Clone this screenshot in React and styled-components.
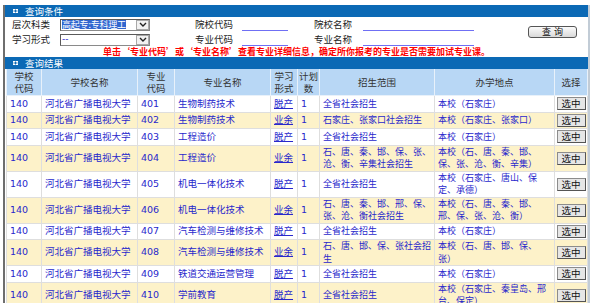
import React from 'react'
import styled, { createGlobalStyle } from 'styled-components'

const GlobalStyle = createGlobalStyle`
  html, body {
    margin: 0;
    padding: 0;
    background: #fff;
  }
  body {
    font-family: "DejaVu Sans", "Noto Sans CJK SC", sans-serif;
    font-size: 9.5px;
    color: #222;
  }
`

const rows = [
  { code: '401', major: '生物制药技术', mode: '脱产', area: '全省社会招生', place: '本校（石家庄）' },
  { code: '402', major: '生物制药技术', mode: '业余', area: '石家庄、张家口社会招生', place: '本校（石家庄、张家口）' },
  { code: '403', major: '工程造价', mode: '脱产', area: '全省社会招生', place: '本校（石家庄）' },
  { code: '404', major: '工程造价', mode: '业余', area: '石、唐、秦、邯、保、张、\n沧、衡、辛集社会招生', place: '本校（石、唐、秦、邯、\n保、张、沧、衡、辛集）' },
  { code: '405', major: '机电一体化技术', mode: '脱产', area: '全省社会招生', place: '本校（石家庄、唐山、保\n定、承德）' },
  { code: '406', major: '机电一体化技术', mode: '业余', area: '石、唐、秦、邯、邢、保、\n张、沧、衡社会招生', place: '本校（石、唐、秦、邯、\n邢、保、张、沧、衡）' },
  { code: '407', major: '汽车检测与维修技术', mode: '脱产', area: '全省社会招生', place: '本校（石家庄）' },
  { code: '408', major: '汽车检测与维修技术', mode: '业余', area: '石、唐、邯、保、张社会招\n生', place: '本校（石、唐、邯、保、\n张）' },
  { code: '409', major: '铁道交通运营管理', mode: '脱产', area: '全省社会招生', place: '本校（石家庄）' },
  { code: '410', major: '学前教育', mode: '脱产', area: '全省社会招生', place: '本校（石家庄、秦皇岛、邢\n台、保定）' },
]

const columns = [
  { title: '学校\n代码', width: 35 },
  { title: '学校名称', width: 96 },
  { title: '专业\n代码', width: 37 },
  { title: '专业名称', width: 96 },
  { title: '学习\n形式', width: 27 },
  { title: '计划\n数', width: 22 },
  { title: '招生范围', width: 115 },
  { title: '办学地点', width: 120 },
  { title: '选择', width: 33 },
]

function BarIcon() {
  return (
    <svg width="5" height="4" viewBox="0 0 5 4">
      <rect x="0" y="0" width="5" height="4" fill="#fff" />
      <line x1="2.5" y1="0.5" x2="2.5" y2="3.5" stroke="#0b69b5" strokeWidth="1" />
      <line x1="0.5" y1="2" x2="4.5" y2="2" stroke="#0b69b5" strokeWidth="1" />
    </svg>
  )
}

function Chevron() {
  return (
    <svg width="8" height="5" viewBox="0 0 8 5">
      <path d="M1 1 L4 4 L7 1" fill="none" stroke="#222" strokeWidth="1.4" />
    </svg>
  )
}

function App() {
  return (
    <>
      <GlobalStyle />
      <Page>
        <Bar>
          <BarIcon />
          <span>查询条件</span>
        </Bar>
        <Form>
          <Label $pl={7}>层次科类</Label>
          <Select>
            <SelectValue>
              <Highlight>高起专:专科理工</Highlight>
            </SelectValue>
            <Arrow><Chevron /></Arrow>
          </Select>
          <Label $right $pr={9}>院校代码</Label>
          <Input />
          <Label $right $pr={11}>院校名称</Label>
          <Input />
          <QueryButton>查询</QueryButton>

          <Label $pl={7}>学习形式</Label>
          <Select>
            <SelectValue>
              <Placeholder>--</Placeholder>
            </SelectValue>
            <Arrow><Chevron /></Arrow>
          </Select>
          <Label $right $pr={9}>专业代码</Label>
          <Input />
          <Label $right $pr={11}>专业名称</Label>
          <Input />

          <Notice>单击‘专业代码’或‘专业名称’查看专业详细信息，确定所你报考的专业是否需要加试专业课。</Notice>
        </Form>
        <Bar>
          <BarIcon />
          <span>查询结果</span>
        </Bar>
        <Table>
          <colgroup>
            {columns.map((c, i) => <col key={i} style={{ width: c.width }} />)}
          </colgroup>
          <thead>
            <tr>
              {columns.map((c, i) => <Th key={i}>{c.title}</Th>)}
            </tr>
          </thead>
          <tbody>
            {rows.map((r, i) => {
              const tall = r.area.includes('\n') || r.place.includes('\n')
              return (
                <Row key={r.code} $odd={i % 2 === 1} $tall={tall}>
                  <Td>140</Td>
                  <Td>河北省广播电视大学</Td>
                  <Td>{r.code}</Td>
                  <Td>{r.major}</Td>
                  <Td><Mode>{r.mode}</Mode></Td>
                  <Td>1</Td>
                  <Td $small>{r.area}</Td>
                  <Td $small>{r.place}</Td>
                  <Td $center>
                    <PickButton>选中</PickButton>
                  </Td>
                </Row>
              )
            })}
          </tbody>
        </Table>
      </Page>
    </>
  )
}

export default App

const Page = styled.div`
  margin: 5px 0 0 3px;
  width: 583px;
  border-left: 2px solid #6e6e6e;
  border-right: 2px solid #c2ccd6;
`
const Bar = styled.div`
  height: 12px;
  background: #0b69b5;
  color: #fff;
  display: flex;
  align-items: center;
  gap: 7px;
  padding-left: 8px;
  font-family: "Noto Sans CJK SC", sans-serif;
  font-size: 9.5px;
  line-height: 12px;
`
const Form = styled.div`
  display: grid;
  grid-template-columns: 55px 90px 92px 46px 75px 111px 1fr;
  grid-template-rows: 15px 15px 10px;
  align-items: center;
`
const Label = styled.div`
  font-family: "Noto Sans CJK SC", sans-serif;
  font-size: 9.5px;
  line-height: 11px;
  color: #222;
  padding-left: ${p => p.$pl || 0}px;
  padding-right: ${p => p.$pr || 0}px;
  text-align: ${p => (p.$right ? 'right' : 'left')};
`
const Select = styled.div`
  width: 90px;
  height: 12px;
  box-sizing: border-box;
  display: flex;
  background: #fff;
  border: 1px solid #8a8a8a;
  border-top-color: #5a5a5a;
  border-left-color: #5a5a5a;
`
const SelectValue = styled.div`
  flex: 1;
  min-width: 0;
  display: flex;
  align-items: center;
  padding-left: 1px;
  overflow: hidden;
  white-space: nowrap;
`
const Highlight = styled.span`
  background: #3066cf;
  color: #fff;
  font-family: "Noto Sans CJK SC", sans-serif;
  font-size: 9px;
  line-height: 9px;
  letter-spacing: -0.2px;
`
const Placeholder = styled.span`
  color: #2a2acc;
  font-size: 9px;
  line-height: 9px;
`
const Arrow = styled.div`
  width: 13px;
  flex: none;
  box-sizing: border-box;
  border: 1px solid #a8a8a8;
  background: #f2f2f2;
  display: flex;
  align-items: center;
  justify-content: center;
`
const Input = styled.div`
  height: 12px;
  box-sizing: border-box;
  border-bottom: 1px solid #6f6ff4;
`
const QueryButton = styled.button`
  grid-column: 7;
  grid-row: 1 / 3;
  justify-self: start;
  margin-left: 54px;
  width: 49px;
  height: 12px;
  padding: 0;
  border: 1px solid #555;
  border-radius: 3px;
  background: linear-gradient(#fbfbfb, #d9d9d9);
  font-family: "Noto Sans CJK SC", sans-serif;
  font-size: 9px;
  line-height: 10px;
  letter-spacing: 3px;
  text-indent: 3px;
  color: #111;
`
const Notice = styled.div`
  grid-column: 1 / -1;
  text-align: center;
  color: #ff0000;
  font-weight: bold;
  font-family: "Noto Sans CJK SC", sans-serif;
  font-size: 9px;
  line-height: 10px;
`
const Table = styled.table`
  width: 581px;
  margin-left: 1px;
  border-collapse: collapse;
  table-layout: fixed;
`
const Th = styled.th`
  height: 26px;
  padding: 0;
  background: #b8d7f5;
  border: 1px solid #e8f1fa;
  border-top: none;
  font-family: "Noto Sans CJK SC", sans-serif;
  font-weight: normal;
  font-size: 9.5px;
  line-height: 12.5px;
  color: #333;
  white-space: pre;
  text-align: center;
  vertical-align: middle;
`
const Row = styled.tr`
  height: ${p => (p.$tall ? 26 : 16.5)}px;
  background: ${p => (p.$odd ? '#fdf2c9' : '#fff')};
`
const Td = styled.td`
  padding: 0 0 0 3px;
  border: 1px solid #dedede;
  color: #2828cc;
  font-size: ${p => (p.$small ? 9 : 9.5)}px;
  line-height: 12.5px;
  white-space: pre;
  overflow: hidden;
  vertical-align: middle;
  text-align: ${p => (p.$center ? 'center' : 'left')};
  ${p => p.$center && 'padding: 0;'}
`
const Mode = styled.span`
  text-decoration: underline;
`
const PickButton = styled.button`
  display: block;
  margin: 0 auto;
  width: 29px;
  height: 13px;
  padding: 0;
  border: 1px solid #8c8c8c;
  border-right-color: #555;
  border-bottom-color: #555;
  background: #e6e6e6;
  font-family: "Noto Sans CJK SC", sans-serif;
  font-size: 9.5px;
  line-height: 11px;
  color: #111;
`
